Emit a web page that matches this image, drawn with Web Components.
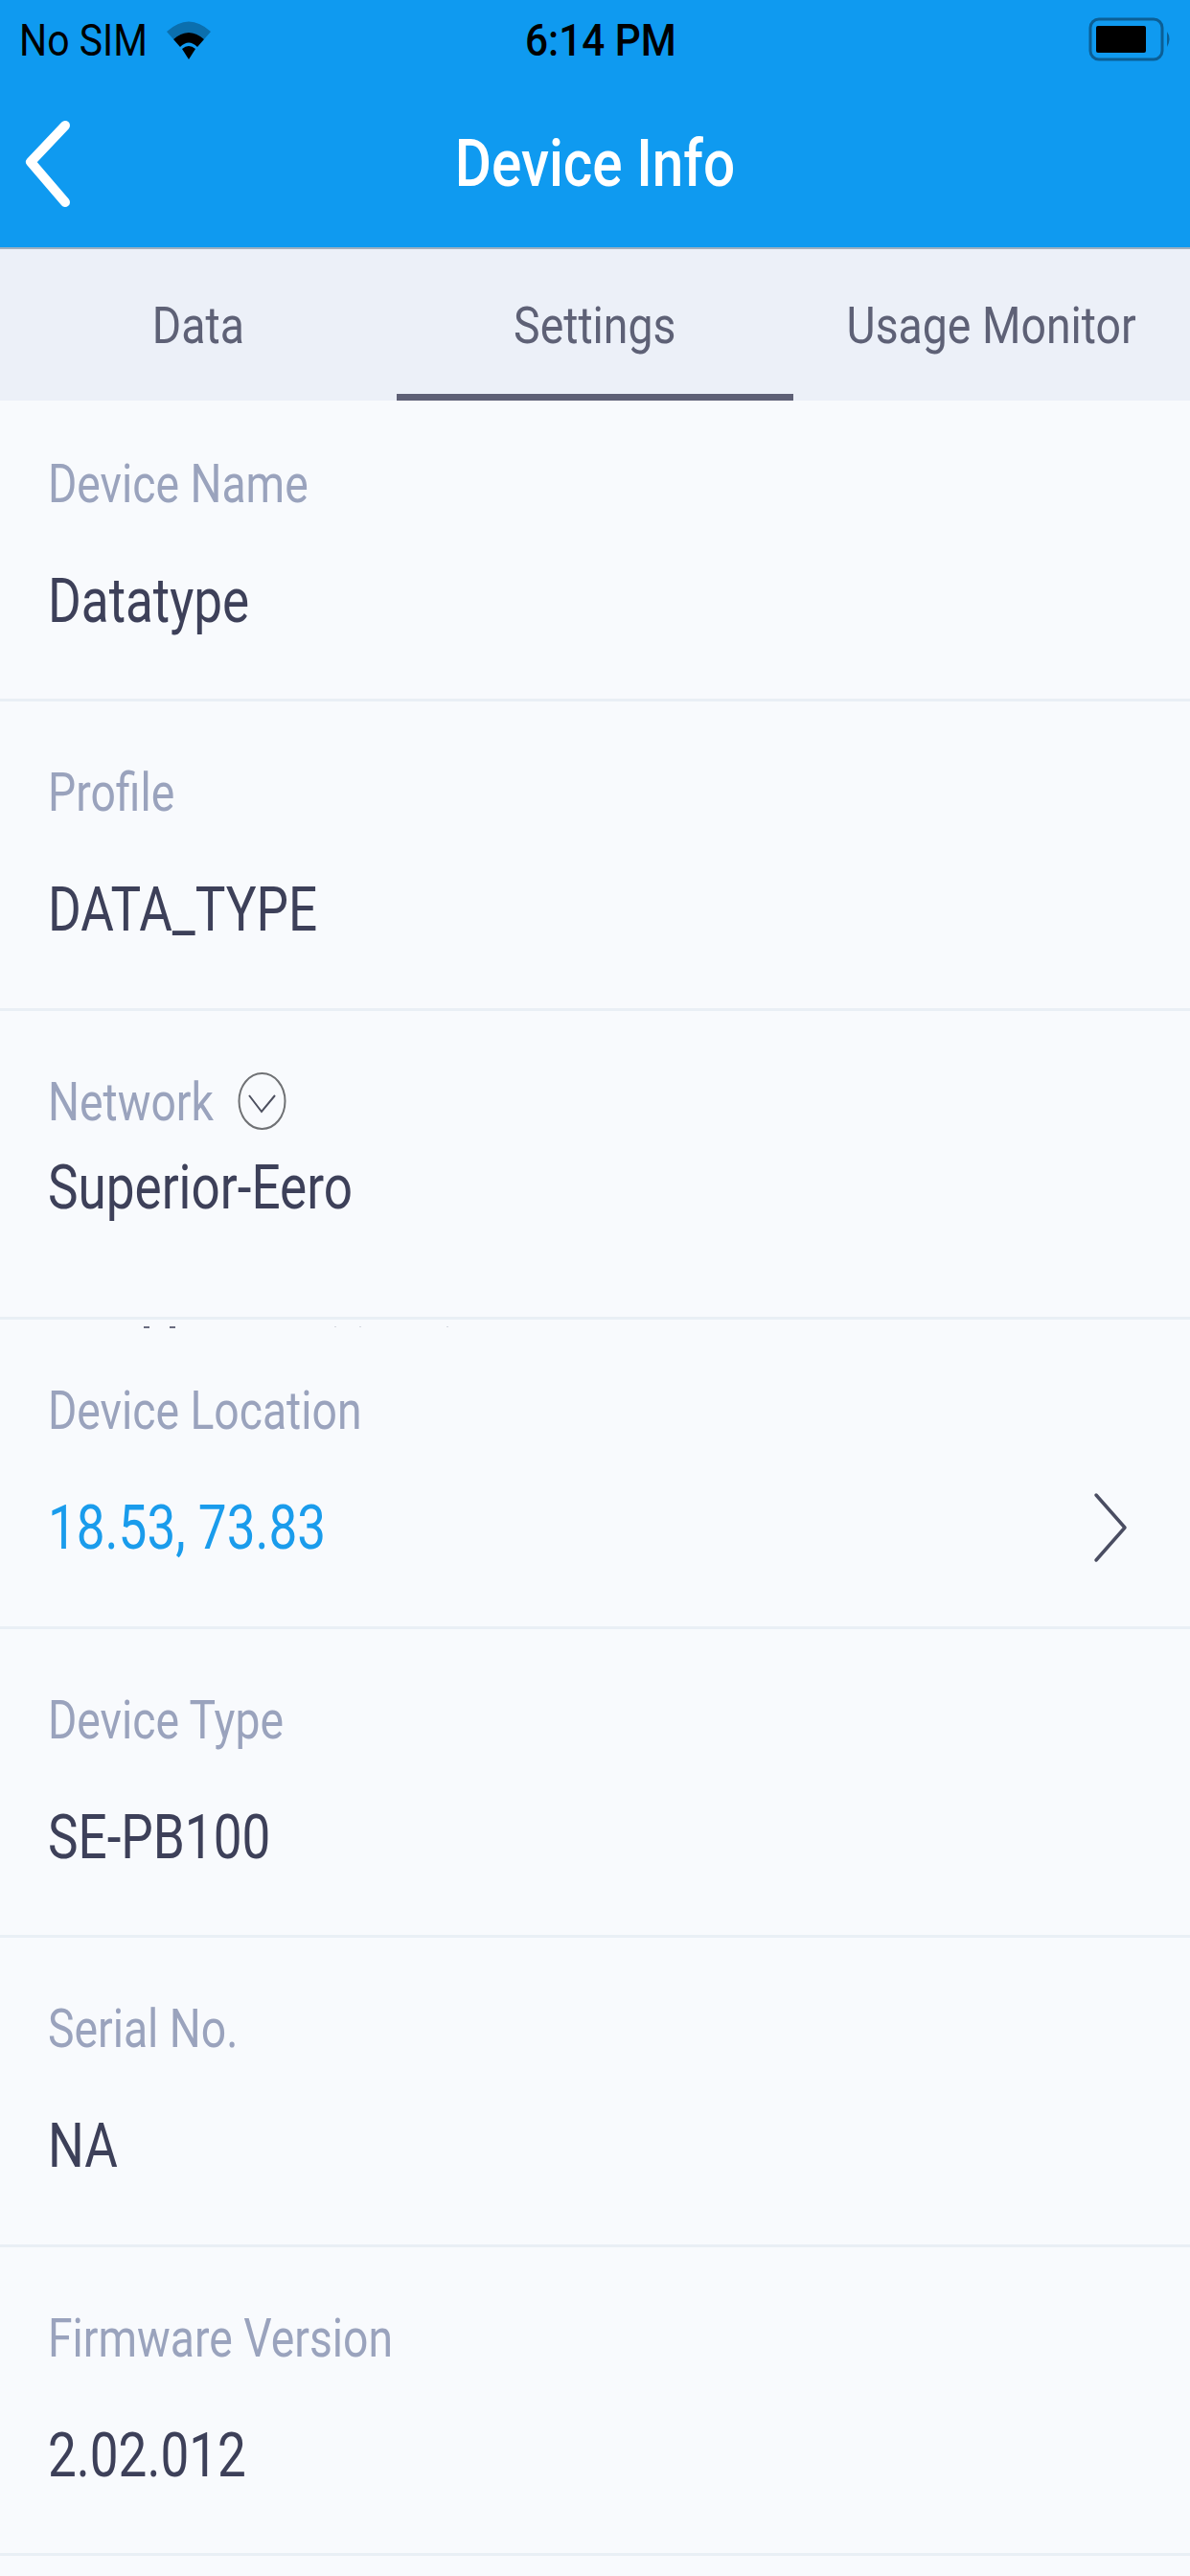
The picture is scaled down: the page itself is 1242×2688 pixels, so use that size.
<!DOCTYPE html>
<html>
<head>
<meta charset="utf-8">
<title>Device Info</title>
<style>
  html, body { margin: 0; padding: 0; background: #f8fafd; }
  body { width: 1242px; height: 2688px; overflow: hidden; font-family: Roboto, "Liberation Sans", sans-serif; }
</style>
</head>
<body>
<device-screen>
  <status-bar carrier="No SIM" time="6:14 PM"></status-bar>
  <nav-header title="Device Info"></nav-header>
  <tab-bar>
    <tab-item>Data</tab-item>
    <tab-item active>Settings</tab-item>
    <tab-item>Usage Monitor</tab-item>
  </tab-bar>
  <info-row first label="Device Name">Datatype</info-row>
  <info-row label="Profile">DATA_TYPE</info-row>
  <info-row label="Network" dropdown>Superior-Eero</info-row>
  <info-row label="Device Location" link clipped>18.53, 73.83</info-row>
  <info-row label="Device Type">SE-PB100</info-row>
  <info-row label="Serial No.">NA</info-row>
  <info-row label="Firmware Version">2.02.012</info-row>
</device-screen>

<script>
class DeviceScreen extends HTMLElement {
  constructor() {
    super();
    this.attachShadow({ mode: "open" }).innerHTML = `
      <style>
        :host { display: flex; flex-direction: column; width: 1242px; height: 2688px; background: #f8fafd; overflow: hidden; }
      </style>
      <slot></slot>`;
  }
}

class StatusBar extends HTMLElement {
  connectedCallback() {
    this.attachShadow({ mode: "open" }).innerHTML = `
      <style>
        :host { display: flex; align-items: center; height: 84px; padding: 0 16px 0 20px; background: #0f9af0; color: #000; font-size: 46px; box-sizing: border-box; position: relative; }
        .t { display: inline-block; transform-origin: left center; white-space: nowrap; line-height: 84px; }
        .carrier { transform: scaleX(.89); width: 152px; }
        .left { display: flex; align-items: center; flex: 1; }
        .time { position: absolute; left: 548px; top: 0; font-weight: 500; transform: scaleX(.92); }
        svg { display: block; }
      </style>
      <div class="left">
        <span class="t carrier">${this.getAttribute("carrier")}</span>
        <svg width="50" height="44" viewBox="0 0 50 44">
          <path d="M2 13 Q25 -8 48 13 L41 21 Q25 7 9 21Z" fill="#0b6fae"/>
          <path d="M9 21 Q25 7 41 21 L34 29 Q25 20 16 29Z" fill="#000"/>
          <path d="M18 31 Q25 25 32 31 L25 42Z" fill="#000"/>
        </svg>
      </div>
      <span class="t time">${this.getAttribute("time")}</span>
      <svg width="90" height="46" viewBox="0 0 90 46" style="margin-top:-2px">
        <rect x="2" y="2" width="75" height="42" rx="9" fill="none" stroke="#0b5f96" stroke-width="3"/>
        <rect x="8" y="9" width="52" height="28" rx="2" fill="#000"/>
        <path d="M82 15 Q87 22 82 31Z" fill="#0b5f96"/>
      </svg>`;
  }
}

class NavHeader extends HTMLElement {
  connectedCallback() {
    this.attachShadow({ mode: "open" }).innerHTML = `
      <style>
        :host { display: flex; align-items: center; justify-content: center; height: 174px; background: #0f9af0; border-bottom: 2px solid #9fb0bf; position: relative; }
        .title { color: #fff; font-size: 68px; font-weight: 500; line-height: 80px; transform: scaleX(.86); white-space: nowrap; }
        svg { position: absolute; left: 20px; top: 30px; }
      </style>
      <svg width="60" height="110" viewBox="0 0 60 110">
        <path d="M48 17 L12 55 L48 97" fill="none" stroke="#fff" stroke-width="10" stroke-linecap="round" stroke-linejoin="round"/>
      </svg>
      <span class="title">${this.getAttribute("title")}</span>`;
  }
}

class TabBar extends HTMLElement {
  constructor() {
    super();
    this.attachShadow({ mode: "open" }).innerHTML = `
      <style>
        :host { display: grid; grid-template-columns: repeat(3, 1fr); height: 158px; background: #ecf0f8; }
      </style>
      <slot></slot>`;
  }
}

class TabItem extends HTMLElement {
  connectedCallback() {
    this.attachShadow({ mode: "open" }).innerHTML = `
      <style>
        :host { display: flex; align-items: center; justify-content: center; box-sizing: border-box; color: #5e6176; font-size: 53px; white-space: nowrap; }
        :host([active]) { border-bottom: 7px solid #5e6076; }
        span { display: inline-block; transform: scaleX(.875); margin-top: 1px; }
        :host([active]) span { margin-top: 8px; }
      </style>
      <span><slot></slot></span>`;
  }
}

class InfoRow extends HTMLElement {
  connectedCallback() {
    const dropdown = this.hasAttribute("dropdown");
    const link = this.hasAttribute("link");
    this.attachShadow({ mode: "open" }).innerHTML = `
      <style>
        :host { display: flex; flex-direction: column; box-sizing: border-box; height: 322.5px; padding: 63px 52px 0 50px; border-bottom: 3px solid #e9eff5; position: relative; flex: none; }
        :host([first]) { height: 314px; padding-top: 55px; }
        .label { display: flex; align-items: center; height: 64px; color: #9aa3bd; font-size: 56px; line-height: 64px; }
        .value { display: flex; align-items: center; justify-content: space-between; height: 72px; margin-top: 54px; color: #3d4059; font-size: 64.7px; line-height: 72px; }
        :host([dropdown]) .value { margin-top: 21px; }
        :host([link]) .value { color: #1a9cec; }
        .t { display: inline-block; transform: scaleX(.82); transform-origin: left center; white-space: nowrap; }
        .label .t { transform: scaleX(.826); }
        .label svg { position: absolute; left: 247px; top: 62px; }
        .scrap { position: absolute; left: 0; top: 0; }
      </style>
      <div class="label"><span class="t">${this.getAttribute("label")}</span>
        ${dropdown ? `<svg width="54" height="64" viewBox="0 0 54 64">
          <ellipse cx="26.5" cy="32" rx="24" ry="29" fill="none" stroke="#6f7174" stroke-width="2"/>
          <path d="M13 26 L26 43 L40 26" fill="none" stroke="#4c4f5f" stroke-width="2"/>
        </svg>` : ""}
      </div>
      <div class="value"><span class="t"><slot></slot></span>
        ${link ? `<svg width="38" height="76" viewBox="0 0 38 76" style="margin-right:11px">
          <path d="M3 4 L33 38 L3 72" fill="none" stroke="#4a4d62" stroke-width="3.5" stroke-linecap="round" stroke-linejoin="round"/>
        </svg>` : ""}
      </div>
      ${this.hasAttribute("clipped") ? `<svg class="scrap" width="500" height="12">
        <rect x="150" y="7" width="6" height="2" fill="#6a6d80"/><rect x="177" y="7" width="6" height="2" fill="#6a6d80"/>
        <rect x="349" y="7" width="2" height="1" fill="#d5d8e0"/><rect x="375" y="7" width="2" height="1" fill="#d5d8e0"/><rect x="466" y="7" width="2" height="1" fill="#d5d8e0"/>
      </svg>` : ""}`;
  }
}

customElements.define("device-screen", DeviceScreen);
customElements.define("status-bar", StatusBar);
customElements.define("nav-header", NavHeader);
customElements.define("tab-bar", TabBar);
customElements.define("tab-item", TabItem);
customElements.define("info-row", InfoRow);
</script>
</body>
</html>
